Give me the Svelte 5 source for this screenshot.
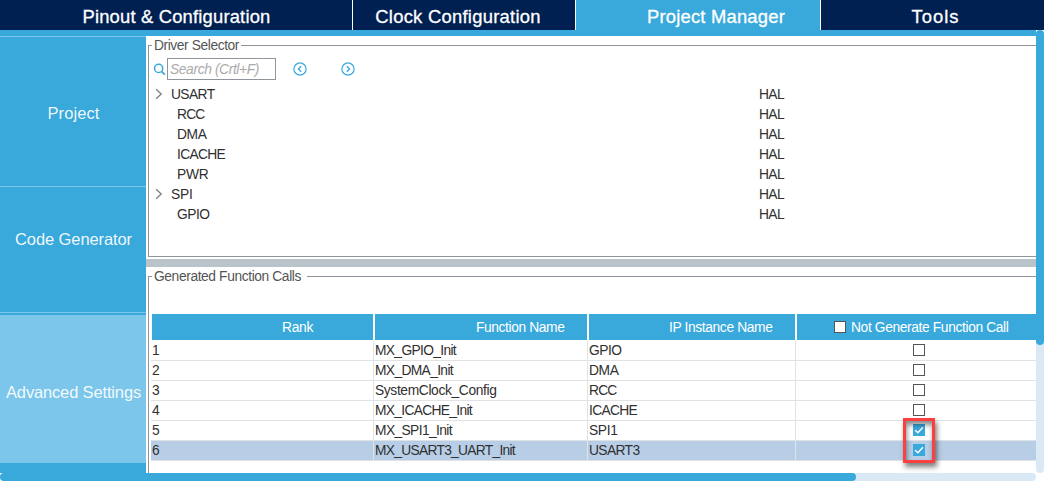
<script>
  const tabs = [
    { label: 'Pinout & Configuration', span: 188 },
    { label: 'Clock Configuration', span: 165.5 },
    { label: 'Project Manager', span: 138 },
    { label: 'Tools', span: 48 }
  ];
  const activeTab = 2;
  const drivers = [
    { name: 'USART', span: 43.5, parent: true },
    { name: 'RCC', span: 27.5 },
    { name: 'DMA', span: 29.5 },
    { name: 'ICACHE', span: 48 },
    { name: 'PWR', span: 31.5 },
    { name: 'SPI', span: 21.5, parent: true },
    { name: 'GPIO', span: 32.5 }
  ];
  const calls = [
    { fn: 'MX_GPIO_Init', fnSpan: 81, ip: 'GPIO', ipSpan: 32.5 },
    { fn: 'MX_DMA_Init', fnSpan: 78, ip: 'DMA', ipSpan: 29.5 },
    { fn: 'SystemClock_Config', fnSpan: 121.5, ip: 'RCC', ipSpan: 27.5 },
    { fn: 'MX_ICACHE_Init', fnSpan: 97, ip: 'ICACHE', ipSpan: 48 },
    { fn: 'MX_SPI1_Init', fnSpan: 77, ip: 'SPI1', ipSpan: 28.5, checked: true },
    { fn: 'MX_USART3_UART_Init', fnSpan: 140, ip: 'USART3', ipSpan: 50.5, checked: true, selected: true }
  ];

  // Spreads the letters of a label over a given width.
  function fit(node, span) {
    const natural = node.getBoundingClientRect().width;
    node.style.letterSpacing = (span - natural) / node.textContent.length + 'px';
  }
</script>

{#snippet box(checked)}
  <span class="box" class:checked>
    {#if checked}
      <svg width="12" height="12" viewBox="0 0 12 12"><path d="M2.2 6.3 4.9 8.8 9.9 3.2" fill="none" stroke="#fff" stroke-width="1.5" /></svg>
    {/if}
  </span>
{/snippet}

<div class="app">
  <nav class="tabs">
    {#each tabs as t, n}
      <div class="tab" class:active={n === activeTab}><span use:fit={t.span}>{t.label}</span></div>
    {/each}
  </nav>
  <div class="body">
    <div class="main">
      <div class="strip"></div>
      <div class="content">
        <aside>
          <div class="side project"><span use:fit={52}>Project</span></div>
          <div class="side code"><span use:fit={117}>Code Generator</span></div>
          <div class="side advanced"><span use:fit={135}>Advanced Settings</span></div>
        </aside>
        <div class="panes">
          <section class="selector">
            <div class="legend"><i></i><span use:fit={85}>Driver Selector</span><b></b></div>
            <div class="frame">
              <div class="search">
                <svg class="lens" width="13" height="13" viewBox="0 0 13 13" fill="none" stroke="#39a9dc" stroke-width="1.5"><circle cx="5.6" cy="5.4" r="4.1" /><path d="m8.5 8.3 3.3 3.3" stroke-width="1.8" /></svg>
                <div class="input"><span use:fit={89}>Search (Crtl+F)</span></div>
                <svg class="prev" width="14" height="14" viewBox="0 0 14 14" fill="none" stroke="#39a9dc"><circle cx="7" cy="7" r="6.1" stroke-width="1.25" /><path d="M8.2 4.3 5.5 7l2.7 2.7" stroke-width="1.4" /></svg>
                <svg class="next" width="14" height="14" viewBox="0 0 14 14" fill="none" stroke="#39a9dc"><circle cx="7" cy="7" r="6.1" stroke-width="1.25" /><path d="M5.8 4.3 8.5 7 5.8 9.7" stroke-width="1.4" /></svg>
              </div>
              {#each drivers as d}
                <div class="driver" class:parent={d.parent}>
                  <div class="name">
                    {#if d.parent}
                      <svg width="8" height="12" viewBox="0 0 8 12"><path d="M1.2 1.2 6.2 6l-5 4.8" fill="none" stroke="#777" stroke-width="1.2" /></svg>
                    {/if}
                    <span use:fit={d.span}>{d.name}</span>
                  </div>
                  <span use:fit={25}>HAL</span>
                </div>
              {/each}
            </div>
          </section>
          <div class="splitter"></div>
          <section class="calls">
            <div class="legend wide"><i></i><span use:fit={147}>Generated Function Calls</span><b></b></div>
            <div class="frame">
              <div class="row head">
                <div><span use:fit={31}>Rank</span></div>
                <div><span use:fit={88.5}>Function Name</span></div>
                <div><span use:fit={103.5}>IP Instance Name</span></div>
                <div>{@render box(false)}<span use:fit={157.5}>Not Generate Function Call</span></div>
              </div>
              {#each calls as c, n}
                <div class="row" class:selected={c.selected}>
                  <div><span use:fit={7}>{n + 1}</span></div>
                  <div><span use:fit={c.fnSpan}>{c.fn}</span></div>
                  <div><span use:fit={c.ipSpan}>{c.ip}</span></div>
                  <div>{@render box(c.checked)}</div>
                </div>
              {/each}
            </div>
          </section>
        </div>
      </div>
    </div>
    <div class="vbar"><div></div></div>
  </div>
  <div class="hbar"><div></div></div>
  <div class="highlight"></div>
</div>

<style>
  .app {
    position: relative;
    width: 1044px;
    height: 481px;
    display: flex;
    flex-direction: column;
    overflow: hidden;
    background: #fff;
    font: 13.8px/20px 'Liberation Sans', Arial, sans-serif;
    color: #303030;
    white-space: nowrap;
  }
  .app * { box-sizing: border-box; }
  .tabs {
    height: 30px;
    display: grid;
    grid-template-columns: 352px 222px 244px 223px;
    gap: 1px;
    background: #fff;
  }
  .tab {
    height: 30px;
    background: #002052;
    color: #fff;
    font-size: 18.4px;
    line-height: 34px;
    text-align: center;
    -webkit-text-stroke: 0.3px #fff;
  }
  .tab:first-child { padding-left: 1px; }
  .tab:nth-child(2) { padding-right: 12px; }
  .tab:nth-child(3) { padding-left: 36px; }
  .tab:nth-child(4) { padding-left: 6px; }
  .tab.active { background: #39a9dc; }
  .body { height: 443px; display: flex; }
  .main { width: 1036px; display: flex; flex-direction: column; }
  .strip { height: 6px; background: #39a9dc; }
  .content { height: 437px; display: flex; }
  aside { width: 146px; background: #39a9dc; flex: none; }
  .side {
    border-top: 1px solid #7bc6ea;
    color: rgba(255, 255, 255, 0.93);
    font-size: 16.5px;
    display: flex;
    align-items: center;
    justify-content: center;
  }
  .project { height: 150px; padding: 2px 0 0 1px; }
  .code { height: 126px; padding: 0 0 21px 1px; }
  .advanced {
    height: 151px;
    padding: 7px 0 0 1px;
    background: linear-gradient(#39a9dc 2px, #7bc6ea 2px);
  }
  .panes { width: 890px; background: #fff; }
  section { padding-left: 2px; display: flex; flex-direction: column; }
  .selector { height: 221px; padding-top: 9px; }
  .calls { height: 206px; padding-top: 9px; overflow: hidden; }
  .splitter { height: 8px; margin-top: 2px; background: #b8c3ca; }
  .legend {
    height: 0;
    display: flex;
    align-items: flex-start;
    color: #555;
    line-height: 1px;
  }
  .legend i { width: 4px; height: 1px; background: #8f959c; margin-right: 2px; }
  .legend b { flex: 1; height: 1px; background: #8f959c; margin-left: 2px; }
  .legend.wide b { margin-left: 6px; }
  .frame { border-left: 1px solid #8f959c; }
  .selector .frame { height: 212px; border-bottom: 1px solid #8f959c; padding-top: 12px; }
  .calls .frame { height: 197px; padding: 38px 0 0 2px; }
  .search { height: 24px; display: flex; align-items: center; padding: 0 0 0 4px; margin-bottom: 3px; }
  .lens { margin-right: 1px; }
  .input {
    width: 109px;
    height: 22px;
    border: 1px solid #8f959c;
    padding-left: 2px;
    color: #aaa;
    font-style: italic;
    line-height: 21px;
  }
  .prev { margin-left: 17px; }
  .next { margin-left: 34px; }
  .driver { height: 20px; display: flex; line-height: 22px; }
  .driver .name { width: 610px; padding-left: 28px; display: flex; align-items: flex-start; }
  .driver.parent .name { padding-left: 6px; }
  .driver .name svg { margin: 4px 8px 0 0; }
  .row {
    height: 20px;
    display: grid;
    grid-template-columns: 223px 214px 208px 240px;
    line-height: 19px;
    border-bottom: 1px solid #e0e3e6;
  }
  .row div { height: 19px; border-right: 1px solid #e0e3e6; padding-left: 1px; }
  .row div:last-child { border-right: 0; display: flex; align-items: flex-start; padding-left: 117px; }
  .row .box { margin-top: 3px; }
  .row.selected { background: #b8cee6; }
  .row.head { height: 27px; border-bottom: 1px solid #fff; line-height: 27px; color: #fff; }
  .row.head div {
    height: 26px;
    background: #39a9dc;
    border-right: 1px solid #fff;
    border-left: 1px solid #fff;
  }
  .row.head div:nth-child(1) { padding-left: 130px; }
  .row.head div:nth-child(2) { padding-left: 101px; }
  .row.head div:nth-child(3) { padding-left: 80px; }
  .row.head div:nth-child(4) { border-right: 0; padding-left: 37px; }
  .row.head .box { margin: 7px 5px 0 0; }
  .box { width: 12px; height: 12px; flex: none; border: 1px solid #555; background: #fff; display: block; }
  .box.checked { border: 0; background: #39a9dc; }
  .box svg { display: block; }
  .vbar { width: 8px; background: #d9e9f6; border-radius: 4px; }
  .vbar div { height: 315px; background: #39a9dc; border-radius: 4px; }
  .hbar { width: 1036px; height: 8px; background: #d9e9f6; border-radius: 4px; }
  .hbar div { width: 856px; height: 8px; background: #39a9dc; border-radius: 4px; }
  .highlight {
    position: absolute;
    left: 903px;
    top: 418px;
    width: 32px;
    height: 45px;
    border: 3px solid #fc4042;
    box-shadow: 2px 4px 5px rgba(0, 0, 0, 0.5), inset 1px 4px 5px rgba(0, 0, 0, 0.45);
  }
</style>
